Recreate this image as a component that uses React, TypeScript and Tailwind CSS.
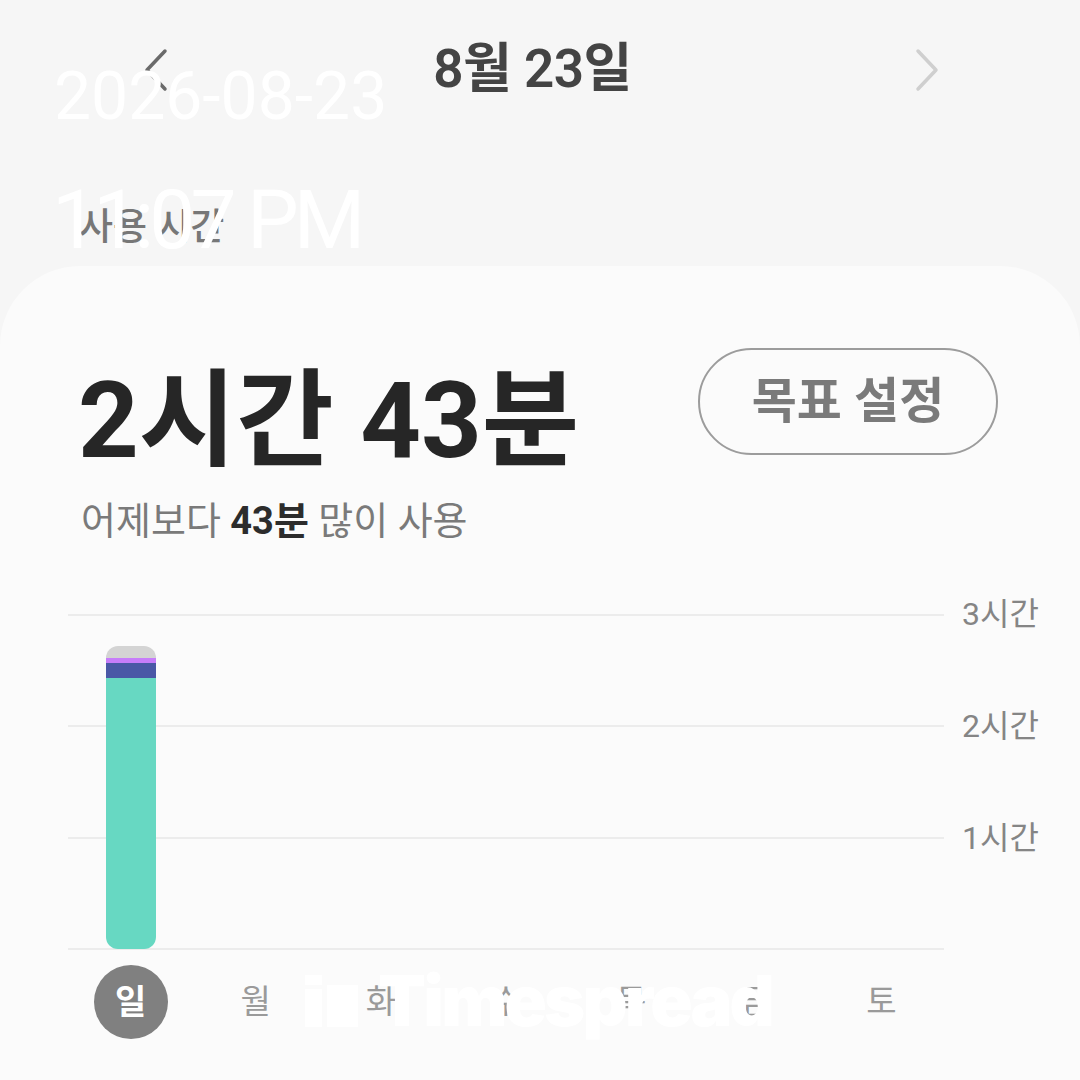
const days = ["일", "월", "화", "수", "목", "금", "토"];
const axis = ["3시간", "2시간", "1시간"];

const font = { fontFamily: 'Roboto, "Noto Sans CJK KR", sans-serif' };

const UsageBar = () => (
  <div className="flex h-[303px] w-[50px] flex-col overflow-hidden rounded-[12px]">
    <div className="h-[12px] bg-[#d4d4d4]" />
    <div className="h-[5px] bg-[#c77dfa]" />
    <div className="h-[15px] bg-[#4a58a6]" />
    <div className="flex-1 bg-[#67d8c2]" />
  </div>
);

const Chevron = ({ dir, color }: { dir: "left" | "right"; color: string }) => (
  <svg width="24" height="44" viewBox="0 0 24 44" fill="none">
    <polyline
      points={dir === "left" ? "21,3 3,22 21,41" : "3,3 21,22 3,41"}
      stroke={color}
      strokeWidth="3.5"
      strokeLinecap="round"
      strokeLinejoin="round"
    />
  </svg>
);

export default function App() {
  return (
    <div className="relative flex h-[1080px] w-[1080px] flex-col overflow-hidden bg-[#f6f6f6]" style={font}>
      {/* header */}
      <div className="flex h-[140px] items-center">
        <div className="ml-[144px]">
          <Chevron dir="left" color="#6a6a6a" />
        </div>
        <div className="flex-1 pr-[18px] text-center text-[53px] font-semibold tracking-[-0.01em] text-[#444]">8월 23일</div>
        <div className="mr-[141px]">
          <Chevron dir="right" color="#cfcfcf" />
        </div>
      </div>

      <div className="mt-[68px] h-[40px] pl-[79px] text-[37px] font-medium leading-[40px] text-[#777]">사용 시간</div>

      {/* card */}
      <div className="mt-[18px] flex flex-1 flex-col rounded-t-[80px] bg-[#fbfbfb]">
        <div className="flex items-start justify-between pl-[78px] pr-[82px] pt-[82px]">
          <div className="flex flex-col">
            <div className="mt-[20px] text-[106px] font-bold leading-none text-[#262626]">2시간 43분</div>
            <div className="mt-[28px] pl-[3px] text-[38px] leading-none text-[#7a7a7a]">
              어제보다 <span className="font-bold text-[#2c2c2c]">43분</span> 많이 사용
            </div>
          </div>
          <button className="flex h-[107px] w-[300px] items-center justify-center rounded-full border-2 border-[#9c9c9c] text-[49px] font-semibold text-[#7a7a7a]">
            목표 설정
          </button>
        </div>

        {/* chart */}
        <div className="mt-[74px] flex">
          <div className="relative ml-[68px] h-[336px] w-[876px]">
            <div className="absolute inset-0 flex flex-col justify-between">
              <div className="h-[2px] bg-[#ececec]" />
              <div className="h-[2px] bg-[#ececec]" />
              <div className="h-[2px] bg-[#ececec]" />
              <div className="h-[2px] bg-[#ececec]" />
            </div>
            <div className="relative grid h-full grid-cols-7 items-end">
              <div className="flex justify-center pb-[1px]">
                <UsageBar />
              </div>
            </div>
          </div>
          <div className="ml-[18px] mt-[-20px] flex flex-col gap-[72px]">
            {axis.map((a) => (
              <div key={a} className="text-[32px] leading-[40px] text-[#858585]">
                {a}
              </div>
            ))}
          </div>
        </div>

        <div className="ml-[68px] mt-[15px] grid w-[876px] grid-cols-7">
          {days.map((d, i) => (
            <div key={d} className="flex h-[74px] items-center justify-center">
              {i === 0 ? (
                <div className="flex h-[74px] w-[74px] items-center justify-center rounded-full bg-[#808080] text-[34px] font-bold text-white">
                  {d}
                </div>
              ) : (
                <span className="text-[33px] text-[#9a9a9a]">{d}</span>
              )}
            </div>
          ))}
        </div>
      </div>

      {/* watermark */}
      <div className="absolute left-[54px] top-[64px] text-[66px] leading-none text-white" style={{ fontFamily: "Roboto, sans-serif" }}>
        2026-08-23
      </div>
      <div className="absolute left-[52px] top-[179px] text-[82px] leading-none tracking-[-0.06em] text-white" style={{ fontFamily: "Roboto, sans-serif" }}>
        11:07 PM
      </div>
      <div className="absolute left-[305px] top-[966px] flex items-end gap-[20px]">
        <svg width="53" height="52" viewBox="0 0 53 52" className="mb-[9px]">
          <rect x="0" y="0" width="17" height="10" fill="#fff" />
          <rect x="0" y="14" width="17" height="38" fill="#fff" />
          <rect x="22" y="10" width="31" height="42" fill="#fff" />
        </svg>
        <div className="text-[70px] font-black leading-none tracking-[-0.04em] text-white" style={{ fontFamily: "Inter, sans-serif" }}>
          Timespread
        </div>
      </div>
    </div>
  );
}
